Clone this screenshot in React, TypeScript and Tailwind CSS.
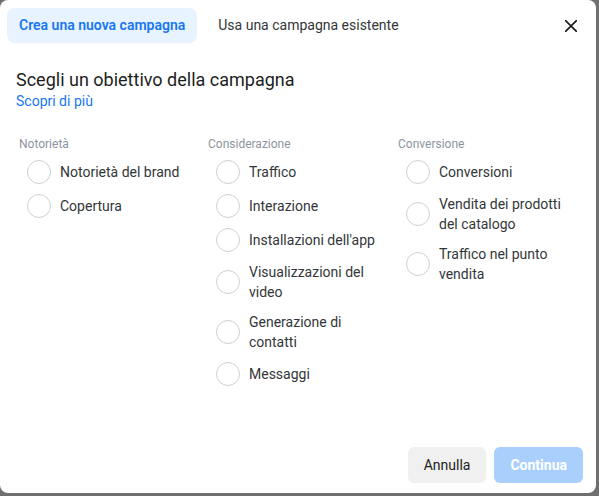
import { JSX } from "react";

type Group = {
  title: string;
  items: string[];
};

const groups: Group[] = [
  { title: "Notorietà", items: ["Notorietà del brand", "Copertura"] },
  {
    title: "Considerazione",
    items: [
      "Traffico",
      "Interazione",
      "Installazioni dell'app",
      "Visualizzazioni del video",
      "Generazione di contatti",
      "Messaggi",
    ],
  },
  {
    title: "Conversione",
    items: [
      "Conversioni",
      "Vendita dei prodotti del catalogo",
      "Traffico nel punto vendita",
    ],
  },
];

const ObjectiveColumn = ({ group }: { group: Group }): JSX.Element => (
  <div className="flex flex-col">
    <p className="text-[12px] leading-4 text-[#8d949e]">{group.title}</p>
    <div className="mt-2 flex flex-col gap-[10px] pl-2">
      {group.items.map((item) => (
        <label key={item} className="flex items-center gap-[9px] cursor-pointer">
          <span className="w-6 h-6 shrink-0 rounded-full border border-[#ccd0d5] bg-white" />
          <span className="w-[132px] text-[14px] leading-5 text-[#333639]">
            {item}
          </span>
        </label>
      ))}
    </div>
  </div>
);

export default function App(): JSX.Element {
  return (
    <section
      className="w-[599px] h-[496px] bg-[#6f6f6f]"
      style={{ fontFamily: "Roboto, 'Liberation Sans', sans-serif" }}
    >
      <div className="w-[596px] h-[493px] bg-white rounded-lg flex flex-col">
        {/* Tabs */}
        <div className="flex items-center pt-2 pl-[7px] pr-[19px]">
          <button className="h-[35px] px-3 rounded-lg bg-[#e7f3ff] text-[14px] font-semibold text-[#1877f2]">
            Crea una nuova campagna
          </button>
          <button className="h-[35px] ml-[9px] px-3 text-[14px] text-[#333639]">
            Usa una campagna esistente
          </button>
          <button className="ml-auto w-3 h-3 flex items-center justify-center">
            <svg width="12" height="12" viewBox="0 0 12 12">
              <path
                d="M0.5 0.5 L11.5 11.5 M11.5 0.5 L0.5 11.5"
                stroke="#1c1e21"
                strokeWidth="1.7"
                strokeLinecap="round"
              />
            </svg>
          </button>
        </div>

        {/* Title */}
        <div className="mt-[25px] px-4">
          <h1 className="text-[18px] leading-6 text-[#1c1e21]">
            Scegli un obiettivo della campagna
          </h1>
          <a className="block text-[14px] leading-[18px] text-[#1877f2] cursor-pointer">
            Scopri di più
          </a>
        </div>

        {/* Objectives */}
        <div className="mt-[26px] pl-[19px] grid grid-cols-[189px_190px_1fr]">
          {groups.map((g) => (
            <ObjectiveColumn key={g.title} group={g} />
          ))}
        </div>

        {/* Footer */}
        <div className="mt-auto flex justify-end gap-2 pr-[13px] pb-[10px]">
          <button className="h-9 px-4 rounded-md bg-[#f0f0f0] text-[14px] text-[#1c1e21]">
            Annulla
          </button>
          <button className="h-9 px-4 rounded-md bg-[#a9d0fc] text-[14px] font-bold text-white">
            Continua
          </button>
        </div>
      </div>
    </section>
  );
}
